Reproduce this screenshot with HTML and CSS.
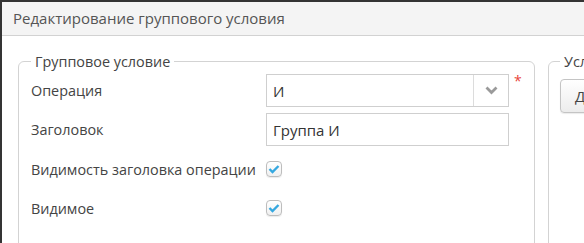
FILE: index.html
```html
<!DOCTYPE html>
<html lang="ru">
<head>
    <meta charset="UTF-8">
    <title>Редактирование группового условия</title>
    <link rel="stylesheet" href="styles.css">
</head>
<body>
    <div class="dialog">
        <div class="dialog-header">Редактирование группового условия</div>
        <div class="dialog-body">
            <fieldset class="group-box main-box">
                <legend>Групповое условие</legend>
                <div class="form-grid">
                    <label class="form-label">Операция</label>
                    <div class="form-field">
                        <div class="select-box">
                            <span class="select-value">И</span>
                            <span class="select-trigger">
                                <svg width="13" height="9" viewBox="0 0 13 9"><path d="M1.5 1.5 L6.5 6.5 L11.5 1.5" fill="none" stroke="#9a9a9a" stroke-width="2.8"/></svg>
                            </span>
                        </div>
                        <span class="required">*</span>
                    </div>

                    <label class="form-label">Заголовок</label>
                    <div class="form-field">
                        <input class="text-input" type="text" value="Группа И">
                    </div>

                    <label class="form-label">Видимость заголовка операции</label>
                    <div class="form-field">
                        <span class="check-box">
                            <svg width="12" height="10" viewBox="0 0 12 10"><path d="M1.5 5 L4.5 8 L10.5 2" fill="none" stroke="#35a8e0" stroke-width="2.4"/></svg>
                        </span>
                    </div>

                    <label class="form-label">Видимое</label>
                    <div class="form-field">
                        <span class="check-box">
                            <svg width="12" height="10" viewBox="0 0 12 10"><path d="M1.5 5 L4.5 8 L10.5 2" fill="none" stroke="#35a8e0" stroke-width="2.4"/></svg>
                        </span>
                    </div>
                </div>
            </fieldset>
            <fieldset class="group-box side-box">
                <legend>Условия</legend>
                <button class="btn">Добавить</button>
            </fieldset>
        </div>
    </div>
</body>
</html>
```

FILE: styles.css
```css
body {
    margin: 0;
    background: #343434;
    font-family: "Open Sans", "DejaVu Sans", sans-serif;
    overflow: hidden;
    height: 243px;
}
.dialog {
    margin: 2px 0 0 2px;
    background: #ffffff;
    height: 241px;
    overflow: hidden;
}
.dialog-header {
    height: 33px;
    line-height: 33px;
    padding-left: 11px;
    font-size: 15px;
    color: #555;
    background: #f4f4f4;
    border-bottom: 1px solid #d2d2d2;
    white-space: nowrap;
}
.dialog-body {
    display: flex;
    gap: 13px;
    padding: 16px 0 0 16px;
}
.group-box {
    margin: 0;
    min-width: 0;
    border: 1px solid #d3d3d3;
    border-radius: 6px;
    height: 300px;
    box-sizing: border-box;
    flex-shrink: 0;
}
.group-box legend {
    font-size: 14.4px;
    color: #444;
    padding: 0 4px;
}
.main-box {
    width: 517px;
    padding: 3px 12px 0 12px;
}
.side-box {
    width: 200px;
    padding: 3px 11px 0 11px;
}
.form-grid {
    display: grid;
    grid-template-columns: 235px 1fr;
    grid-auto-rows: 33px;
    row-gap: 6.3px;
}
.form-label {
    font-size: 14.4px;
    color: #444;
    display: flex;
    align-items: center;
    white-space: nowrap;
}
.form-field {
    display: flex;
    align-items: center;
    position: relative;
}
.select-box {
    width: 243px;
    height: 33px;
    box-sizing: border-box;
    border: 1px solid #cfcfcf;
    display: flex;
    align-items: center;
}
.select-value {
    flex: 1;
    padding-left: 6px;
    font-size: 15px;
    color: #333;
}
.select-trigger {
    width: 34px;
    height: 31px;
    border-left: 1px solid #dcdcdc;
    display: flex;
    align-items: center;
    justify-content: center;
}
.required {
    position: absolute;
    left: 248px;
    top: -3px;
    color: #e8443a;
    font-size: 14px;
}
.text-input {
    width: 243px;
    height: 33px;
    box-sizing: border-box;
    border: 1px solid #cfcfcf;
    padding: 0 6px;
    font-family: inherit;
    font-size: 15px;
    color: #333;
    margin: 0;
    outline: none;
}
.check-box {
    width: 16px;
    height: 16px;
    box-sizing: border-box;
    border: 1px solid #bdbdbd;
    border-radius: 4px;
    background: linear-gradient(#ffffff, #f0f0f0);
    box-shadow: 0 1px 1px rgba(0, 0, 0, 0.08);
    display: flex;
    align-items: center;
    justify-content: center;
}
.btn {
    height: 34px;
    margin-top: 5px;
    padding: 0 14px;
    font-family: inherit;
    font-size: 15px;
    color: #444;
    border: 1px solid #c4c4c4;
    border-radius: 4px;
    background: linear-gradient(#ffffff, #ececec);
    box-shadow: 0 1px 1px rgba(0, 0, 0, 0.08);
}
```
